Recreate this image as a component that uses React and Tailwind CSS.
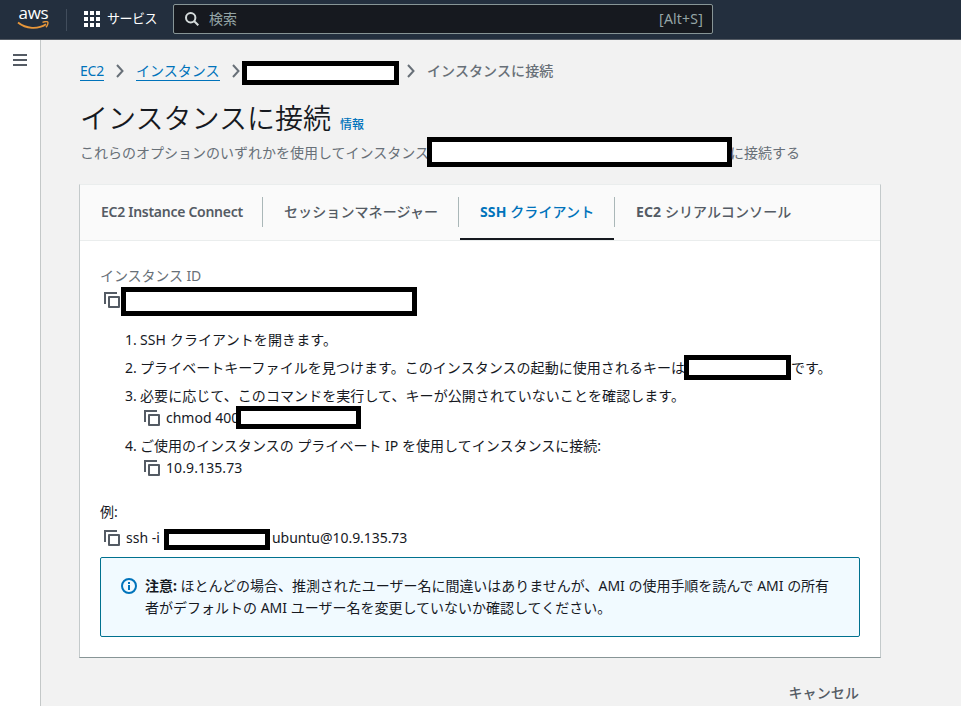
const Redacted = ({ className }) => (
  <span className={`box-border block shrink-0 border-[5px] border-black bg-white ${className}`} />
);

const CopyIcon = () => (
  <svg width="16" height="16" viewBox="0 0 16 16" fill="none" stroke="#545b64" strokeWidth="2" className="block shrink-0">
    <path d="M1 12V1h12" />
    <path d="M5 5h10v10H5z" strokeLinejoin="round" />
  </svg>
);

const Chevron = ({ className }) => (
  <svg width="8" height="14" viewBox="0 0 8 14" fill="none" stroke="#687078" strokeWidth="2" className={`mt-[3px] block shrink-0 ${className}`}>
    <path d="M1 1l5.5 6L1 13" />
  </svg>
);

const Text = ({ className = "", children }) => (
  <span className={`shrink-0 whitespace-nowrap ${className}`}>{children}</span>
);

const Header = () => (
  <header className="flex h-10 shrink-0 items-center border-b border-[#545b64] bg-[#232f3e] text-white">
    <div className="ml-[17px] flex w-[33px] flex-col items-center pb-[3px]">
      <span className="h-[15px] font-['Open_Sans'] text-[17px] leading-[13px] font-medium tracking-[-0.3px]">aws</span>
      <svg width="33" height="9" viewBox="0 0 33 9" fill="none" className="block">
        <path d="M1 1.5C9 8 21 8.5 29 3.2" stroke="#e8973a" strokeWidth="1.800" />
        <path d="M25.500 1.300c2.500-.8 4.800-.8 5.300-.2.500.7-.2 3.400-1.800 5.200" stroke="#e8973a" strokeWidth="1.400" />
      </svg>
    </div>
    <span className="ml-4 h-[22px] w-px bg-[#414d5c]" />
    <svg width="16" height="16" viewBox="0 0 16 16" fill="#fff" className="mb-[2px] ml-[17px] block">
      {[0, 6, 12].map((y) => [0, 6, 12].map((x) => <rect key={`${x}-${y}`} x={x} y={y} width="4" height="4" />))}
    </svg>
    <Text className="ml-[7px] w-[52px] pb-[2px] text-[13px] tracking-[-0.5px]">サービス</Text>
    <div className="mb-px ml-[14px] flex h-[30px] w-[540px] items-center rounded-[2px] border border-[#879596] bg-[#16191f] pr-[9px] pb-px pl-[11px] text-[#95a5a6]">
      <svg width="14" height="14" viewBox="0 0 14 14" fill="none" stroke="#d5dbdb" strokeWidth="2" className="block">
        <circle cx="5.700" cy="5.700" r="4.700" />
        <path d="M9 9l4.300 4.300" />
      </svg>
      <Text className="ml-[10px] text-sm">検索</Text>
      <Text className="ml-auto text-sm tracking-[0.2px]">[Alt+S]</Text>
    </div>
  </header>
);

const Tabs = () => (
  <div className="flex h-14 border-b border-[#eaeded] bg-[#fafafa] pt-3 text-sm leading-[30px] font-bold text-[#545b64]">
    <div className="h-[30px] w-[183px] border-r border-[#aab7b8] pl-[21px]"><Text className="font-semibold tracking-[-0.28px]">EC2 Instance Connect</Text></div>
    <div className="h-[30px] w-[196px] border-r border-[#aab7b8] pl-[21px]"><Text className="font-medium tracking-[0.1px]">セッションマネージャー</Text></div>
    <div className="relative h-[30px] w-[156px] border-r border-[#aab7b8] pl-[21px] text-[#0073bb]">
      <Text className="tracking-[0.1px]">SSH <span className="font-medium">クライアント</span></Text>
      <span className="absolute top-[41px] left-px h-[2px] w-[154px] bg-[#16191f]" />
    </div>
    <div className="h-[30px] pl-[21px]"><Text className="tracking-[0.1px]">EC2 <span className="font-medium">シリアルコンソール</span></Text></div>
  </div>
);

const Row = ({ className = "", children }) => (
  <div className={`flex h-[22px] items-center ${className}`}>{children}</div>
);

const Instructions = () => (
  <div className="pt-[25px] pl-5 text-sm leading-[22px]">
    <div className="flex h-5 items-center text-[#687078]"><Text className="tracking-[-0.1px]">インスタンス ID</Text></div>
    <div className="mt-px flex h-[29px] items-center pl-1">
      <div className="pb-[3px]"><CopyIcon /></div>
      <Redacted className="ml-px h-[29px] w-[296px]" />
    </div>
    <ol className="mt-[13px] flex flex-col gap-1.5">
      <li><Row className="pl-[25px]"><Text className="w-[15px]">1.</Text><Text className="tracking-[0.1px]">SSH クライアントを開きます。</Text></Row></li>
      <li>
        <Row className="pl-[25px]">
          <Text className="w-[15px]">2.</Text>
          <Text className="w-[544px] tracking-[0.05px]">プライベートキーファイルを見つけます。このインスタンスの起動に使用されるキーは</Text>
          <Redacted className="-mt-px h-[25px] w-[107px]" />
          <Text>です。</Text>
        </Row>
      </li>
      <li>
        <Row className="pl-[25px]"><Text className="w-[15px]">3.</Text><Text className="tracking-[0.07px]">必要に応じて、このコマンドを実行して、キーが公開されていないことを確認します。</Text></Row>
        <Row className="pl-11"><CopyIcon /><Text className="ml-1.5 w-[70px]">chmod 400</Text><Redacted className="-mt-px h-[23px] w-[125px]" /></Row>
      </li>
      <li>
        <Row className="pl-[25px]"><Text className="w-[15px]">4.</Text><Text className="tracking-[0.02px]">ご使用のインスタンスの プライベート IP を使用してインスタンスに接続:</Text></Row>
        <Row className="pl-11"><CopyIcon /><Text className="ml-1.5 tracking-[0.1px]">10.9.135.73</Text></Row>
      </li>
    </ol>
    <Row className="mt-[22px]"><Text>例:</Text></Row>
    <Row className="mt-1 pl-1">
      <CopyIcon /><Text className="ml-1.5 w-[38px]">ssh -i</Text>
      <Redacted className="mt-[3px] h-[21px] w-[106px]" /><Text className="ml-[2px] tracking-[-0.05px]">ubuntu@10.9.135.73</Text>
    </Row>
    <div className="mt-2 flex h-20 w-[760px] rounded-[2px] border border-[#00718f] bg-[#f1faff] pt-[17px] pl-5">
      <svg width="16" height="16" viewBox="0 0 16 16" fill="none" stroke="#0073bb" strokeWidth="2" className="mt-[3px] block shrink-0">
        <circle cx="8" cy="8" r="7" />
        <path d="M8 7v5M8 4v2" />
      </svg>
      <div className="ml-2">
        <Row><Text className="tracking-[-0.02px]"><b>注意:</b> ほとんどの場合、推測されたユーザー名に間違いはありませんが、AMI の使用手順を読んで AMI の所有</Text></Row>
        <Row><Text>者がデフォルトの AMI ユーザー名を変更していないか確認してください。</Text></Row>
      </div>
    </div>
  </div>
);

export default function App() {
  return (
    <div className="flex h-[706px] w-[961px] flex-col overflow-hidden bg-[#f2f2f2] font-['Noto_Sans','Noto_Sans_CJK_JP',sans-serif] text-[#16191f]">
      <Header />
      <div className="flex min-h-0 grow">
        <aside className="w-[41px] shrink-0 border-r border-[#c4c8c8] bg-white pt-[14px] pl-[13px]">
          <svg width="14" height="12" viewBox="0 0 14 12" fill="#545b64" className="block">
            <path d="M0 0h14v2H0zM0 5h14v2H0zM0 10h14v2H0z" />
          </svg>
        </aside>
        <main className="w-[840px] shrink-0 pt-[21px] pl-[38px]">
          <nav className="flex h-6 items-start pl-px text-sm leading-5">
            <Text className="h-5 w-6 border-b border-[#0073bb] tracking-[-0.2px] text-[#0073bb]">EC2</Text>
            <Chevron className="ml-3" />
            <Text className="ml-3 h-5 w-[84px] border-b border-[#0073bb] text-[#0073bb]">インスタンス</Text>
            <Chevron className="ml-3" />
            <Redacted className="ml-[2px] h-6 w-[157px]" />
            <Chevron className="ml-2" />
            <Text className="ml-3 font-medium tracking-[0.1px] text-[#687078]">インスタンスに接続</Text>
          </nav>
          <div className="flex h-[52px] items-baseline pt-[15px] pl-px">
            <h1 className="w-[252px] shrink-0 text-[28px] leading-9 font-[350] whitespace-nowrap">インスタンスに接続</h1>
            <Text className="ml-2 text-xs font-medium text-[#0073bb]">情報</Text>
          </div>
          <div className="flex h-[30px] items-center pl-px text-sm text-[#687078]">
            <Text className="w-[347px] pt-px">これらのオプションのいずれかを使用してインスタンス</Text>
            <Redacted className="h-[30px] w-[305px]" />
            <Text className="-ml-[2px] pt-px">に接続する</Text>
          </div>
          <section className="mt-[17px] h-[474px] w-[802px] border border-t-[#eaeded] border-r-[#c4cacb] border-b-[#879596] border-l-[#c4cacb] bg-white">
            <Tabs />
            <Instructions />
          </section>
          <div className="mt-[25px] flex justify-end pr-[22px] text-sm leading-5 font-medium tracking-[0.1px] text-[#545b64]">キャンセル</div>
        </main>
      </div>
    </div>
  );
}
